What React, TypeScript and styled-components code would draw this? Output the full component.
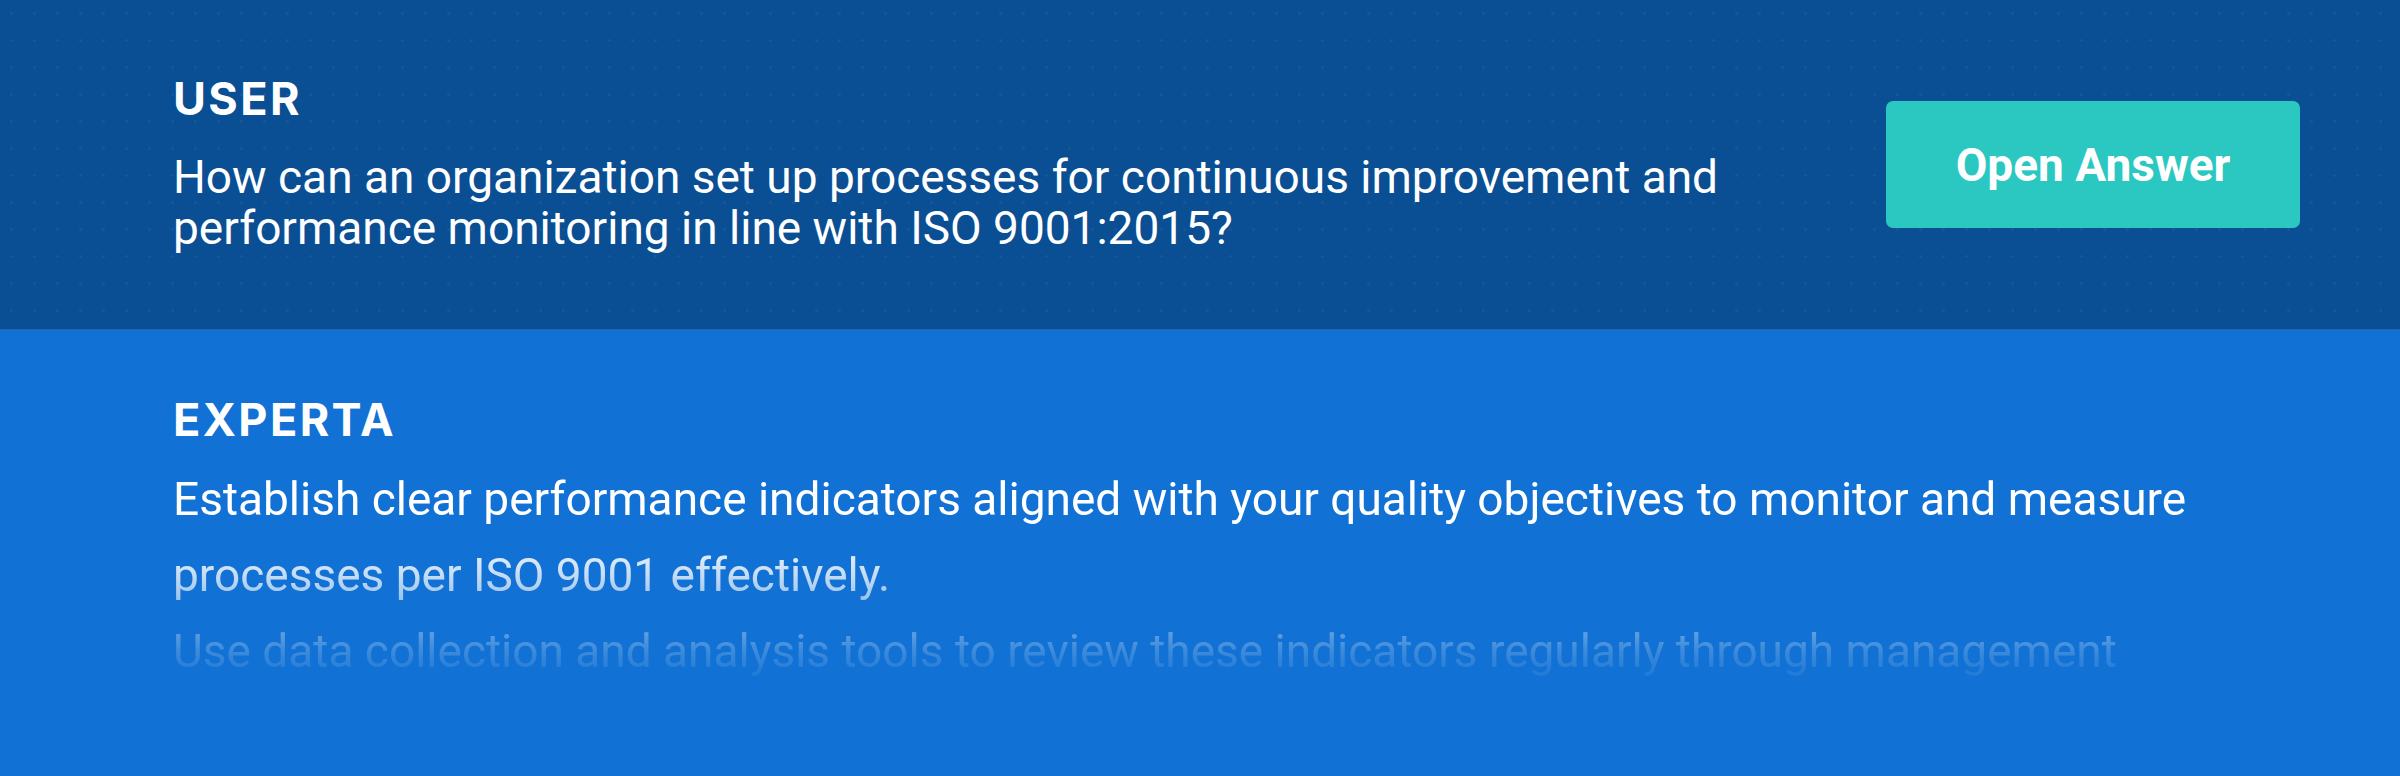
import React from 'react';
import styled, { createGlobalStyle } from 'styled-components';

const GlobalStyle = createGlobalStyle`
  html, body {
    margin: 0;
    padding: 0;
  }
  body {
    background: #1171d4;
    font-family: Roboto, 'Liberation Sans', sans-serif;
  }
`;

const Page = styled.main`
  width: 100%;
  height: 776px;
  overflow: hidden;
  display: flex;
  flex-direction: column;
`;

const QuestionBand = styled.section`
  height: 330px;
  flex-shrink: 0;
  box-sizing: border-box;
  background-color: #0a4e93;
  background-image: radial-gradient(rgba(255, 255, 255, 0.06) 1px, transparent 1.5px);
  background-size: 23px 27px;
  border-bottom: 1px solid rgba(80, 150, 230, 0.35);
  display: flex;
  align-items: center;
  justify-content: space-between;
  padding: 0 100px 0 173px;
`;

const AnswerBand = styled.section`
  flex: 1;
  background: #1171d4;
  padding: 67px 100px 0 173px;
`;

const Block = styled.div<{ $width?: number }>`
  display: flex;
  flex-direction: column;
  max-width: ${(p) => (p.$width ? `${p.$width}px` : 'none')};
`;

const Label = styled.h2<{ $gap: number }>`
  margin: 0 0 ${(p) => p.$gap}px;
  font-family: Inter, 'Open Sans', sans-serif;
  font-weight: 700;
  font-size: 45px;
  line-height: 45px;
  letter-spacing: 2.4px;
  color: #fff;
`;

const Question = styled.p`
  margin: 0;
  font-size: 46px;
  line-height: 51px;
  color: #fff;
`;

const Answer = styled.div`
  max-width: 2050px;
  height: 228px;
  overflow: hidden;
  -webkit-mask-image: linear-gradient(
    to bottom,
    #000 0,
    #000 70px,
    rgba(0, 0, 0, 0.76) 114px,
    rgba(0, 0, 0, 0.18) 190px,
    transparent 228px
  );
  mask-image: linear-gradient(
    to bottom,
    #000 0,
    #000 70px,
    rgba(0, 0, 0, 0.76) 114px,
    rgba(0, 0, 0, 0.18) 190px,
    transparent 228px
  );
`;

const Paragraph = styled.p`
  margin: 0;
  font-size: 46px;
  line-height: 76px;
  color: #fff;
`;

const OpenButton = styled.button`
  width: 414px;
  height: 127px;
  flex-shrink: 0;
  border: 0;
  border-radius: 7px;
  background: #2ac8c0;
  color: #fff;
  font-family: Roboto, 'Liberation Sans', sans-serif;
  font-weight: 700;
  font-size: 46px;
  cursor: pointer;
`;

const App = () => {
  return (
    <>
      <GlobalStyle />
      <Page>
        <QuestionBand>
          <Block $width={1640}>
            <Label $gap={31}>USER</Label>
            <Question>
              How can an organization set up processes for continuous improvement and performance
              monitoring in line with ISO 9001:2015?
            </Question>
          </Block>
          <OpenButton>Open Answer</OpenButton>
        </QuestionBand>
        <AnswerBand>
          <Label $gap={19}>EXPERTA</Label>
          <Answer>
            <Paragraph>
              Establish clear performance indicators aligned with your quality objectives to monitor
              and measure processes per ISO 9001 effectively.
            </Paragraph>
            <Paragraph>
              Use data collection and analysis tools to review these indicators regularly through
              management
            </Paragraph>
          </Answer>
        </AnswerBand>
      </Page>
    </>
  );
};

export default App;
